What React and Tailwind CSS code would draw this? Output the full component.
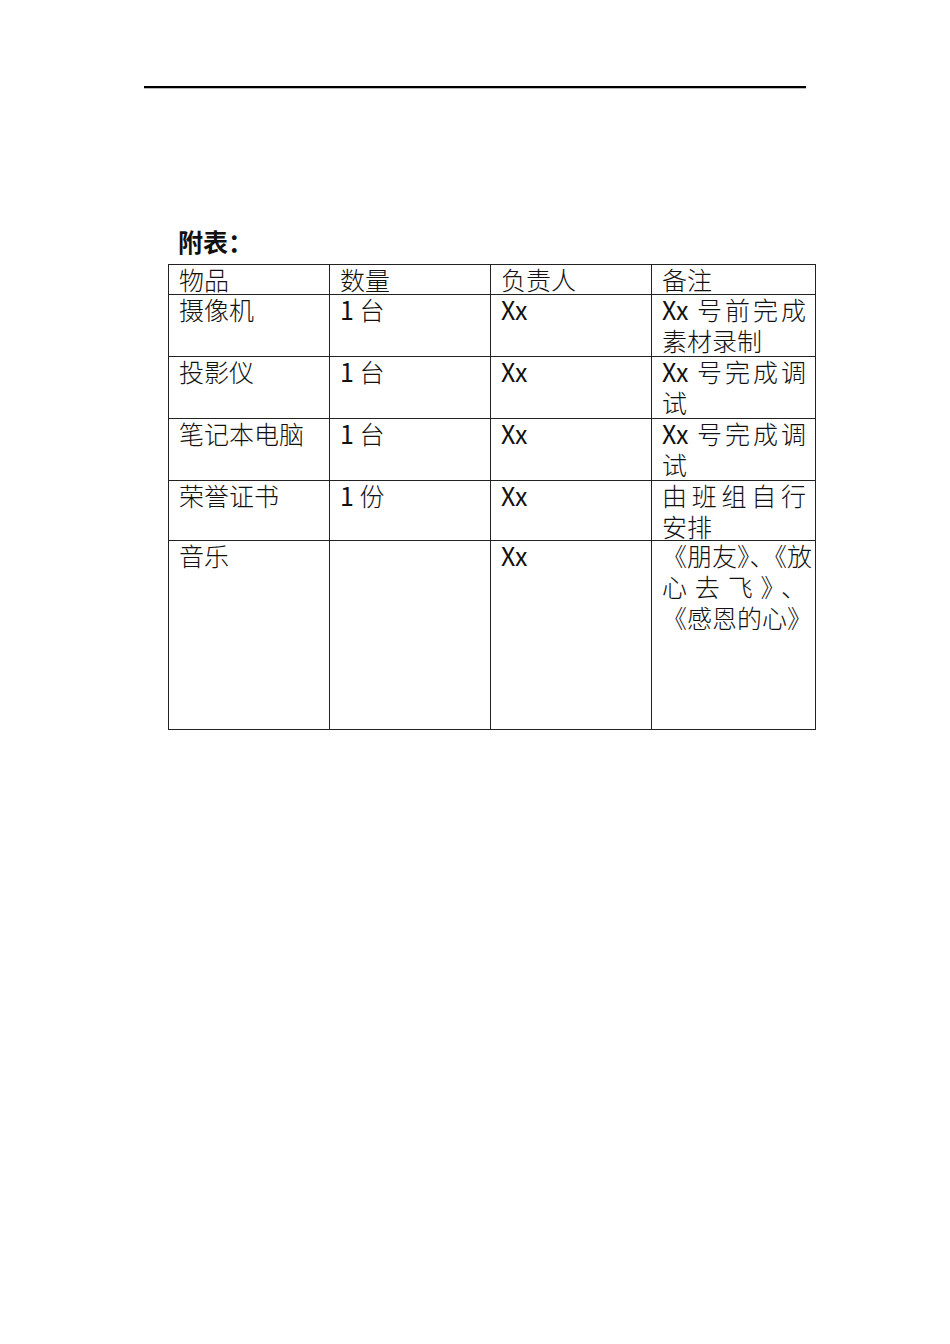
import React from "react";

const rows = [
  { item: "物品", qty: "数量", owner: "负责人", note: ["备注"] },
  { item: "摄像机", qty: "1 台", owner: "Xx", note: ["Xx 号前完成", "素材录制"] },
  { item: "投影仪", qty: "1 台", owner: "Xx", note: ["Xx 号完成调", "试"] },
  { item: "笔记本电脑", qty: "1 台", owner: "Xx", note: ["Xx 号完成调", "试"] },
  { item: "荣誉证书", qty: "1 份", owner: "Xx", note: ["由班组自行", "安排"] },
  { item: "音乐", qty: "", owner: "Xx", note: ["《朋友》、《放", "心去飞》、", "《感恩的心》"] },
];

// Latin bits (Xx, 1) sit in regular weight, CJK in light
function Mixed({ text }) {
  const parts = text.split(/([A-Za-z0-9]+)/);
  return parts.map((p, i) =>
    /^[A-Za-z0-9]+$/.test(p) ? (
      <span key={i} className="font-normal">
        {p}
      </span>
    ) : (
      <React.Fragment key={i}>{p}</React.Fragment>
    )
  );
}

const cell = "border-r border-b border-[#222] pl-[10px] overflow-visible";

function App() {
  return (
    <div
      className="min-h-[1344px] w-[950px] bg-white text-[#111]"
      style={{ fontFamily: '"Noto Sans CJK SC", "Noto Sans", sans-serif' }}
    >
      <div className="pt-[86px] pl-[144px]">
        {/* page header rule */}
        <div className="w-[662px] border-t-2 border-black" />
        <div className="w-[662px] h-px bg-[#bbb]" />
      </div>

      <div className="pl-[178px] pt-[137px]">
        <p className="text-[25px] leading-[31px] font-bold">附表：</p>
      </div>

      <div className="pl-[168px] pt-[7px]">
        <div className="grid w-[647px] grid-cols-[161px_161px_161px_164px] grid-rows-[30px_62px_62px_62px_60px_189px] border-l border-t border-[#222] text-[25px] leading-[31px] font-light">
          {rows.map((r, i) => (
            <React.Fragment key={i}>
              <div className={cell + " -mt-px"}>{r.item}</div>
              <div className={cell + " -mt-px"}>
                <Mixed text={r.qty} />
              </div>
              <div className={cell + " -mt-px"}>
                <Mixed text={r.owner} />
              </div>
              <div className={cell + " -mt-px pr-[9px]"}>
                {r.note.map((line, j) => (
                  <div
                    key={j}
                    className={
                      j < r.note.length - 1
                        ? "whitespace-nowrap text-justify [text-align-last:justify]"
                        : "whitespace-nowrap"
                    }
                  >
                    <Mixed text={line} />
                  </div>
                ))}
              </div>
            </React.Fragment>
          ))}
        </div>
      </div>
    </div>
  );
}

export default App;
